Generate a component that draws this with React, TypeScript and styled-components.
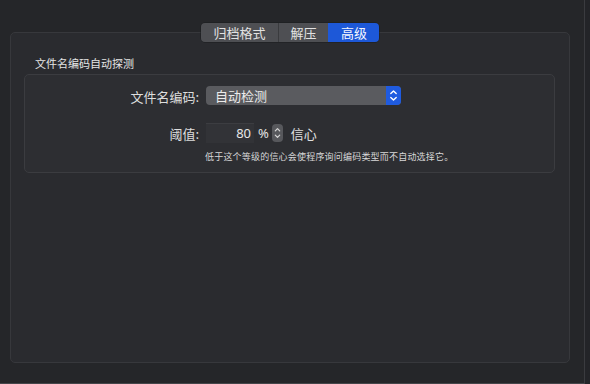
import React from "react";
import styled, { createGlobalStyle } from "styled-components";

const Global = createGlobalStyle`
  html, body { margin: 0; padding: 0; background: #232428; }
  body { font-family: "Noto Sans CJK SC", "Noto Sans", sans-serif; color: #dedede; }
`;

const Window = styled.div`
  width: 584px;
  height: 383px;
  background: #252629;
  border-right: 1px solid #3a3b3f;
  border-bottom: 1px solid #45464a;
  display: flex;
  flex-direction: column;
  align-items: flex-start;
  box-sizing: content-box;
`;

const TabBar = styled.div`
  display: flex;
  align-self: center;
  margin-top: 23px;
  margin-right: 4px;
  height: 19px;
  border-radius: 4px;
  overflow: hidden;
  position: relative;
  z-index: 1;
  box-shadow: 0 0 0 0.5px #1b1c1f;
`;

const Tab = styled.div<{ $active?: boolean; $w: number }>`
  width: ${(p) => p.$w}px;
  height: 19px;
  display: flex;
  align-items: center;
  justify-content: center;
  font-size: 13px;
  line-height: 19px;
  color: ${(p) => (p.$active ? "#f4f6ff" : "#e2e2e2")};
  background: ${(p) => (p.$active ? "#1d58d8" : "#4e4f53")};
  border-left: 1px solid ${(p) => (p.$active ? "#1d58d8" : "#3a3b3e")};
  &:first-child { border-left: none; }
`;

const GroupBox = styled.div`
  margin-top: -10px;
  margin-left: 10px;
  width: 560px;
  height: 331px;
  box-sizing: border-box;
  background: #2a2b2f;
  border: 1px solid #37383c;
  border-radius: 5px;
  padding: 23px 13px 0 13px;
  display: flex;
  flex-direction: column;
`;

const SectionLabel = styled.div`
  font-size: 11px;
  line-height: 14px;
  margin-left: 11px;
  color: #e4e4e4;
`;

const InnerBox = styled.div`
  margin-top: 4px;
  width: 531px;
  height: 99px;
  box-sizing: border-box;
  background: #2d2e32;
  border: 1px solid #3b3c40;
  border-radius: 5px;
  display: grid;
  grid-template-columns: 175px 1fr;
  column-gap: 6px;
  align-content: start;
  padding-top: 11px;
`;

const RowLabel = styled.div<{ $mt?: number }>`
  text-align: right;
  font-size: 13px;
  line-height: 19px;
  height: 20px;
  display: flex;
  align-items: center;
  justify-content: flex-end;
  margin-top: ${(p) => p.$mt ?? 0}px;
  margin-right: 1px;
  color: #dedede;
`;

const Popup = styled.div`
  width: 195px;
  height: 19px;
  border-radius: 4px;
  background: #5a5b5f;
  display: flex;
  align-items: center;
  justify-content: space-between;
  overflow: hidden;
`;

const PopupText = styled.span`
  font-size: 13px;
  line-height: 19px;
  padding-left: 9px;
  color: #ececec;
`;

const PopupArrows = styled.div`
  width: 15px;
  height: 19px;
  background: #1f5be0;
  display: flex;
  align-items: center;
  justify-content: center;
`;

const FieldRow = styled.div<{ $mt?: number }>`
  display: flex;
  align-items: center;
  margin-top: ${(p) => p.$mt ?? 0}px;
  height: 20px;
`;

const NumberField = styled.div`
  width: 48px;
  height: 20px;
  box-sizing: border-box;
  background: #323337;
  border-top: 1px solid #3c3d41;
  font-size: 13px;
  line-height: 19px;
  text-align: right;
  padding-right: 3px;
  color: #e8e8e8;
  font-family: "Noto Sans", "Noto Sans CJK SC", sans-serif;
`;

const Unit = styled.span`
  font-size: 13px;
  margin-left: 4px;
  color: #e4e4e4;
  font-family: "Noto Sans", sans-serif;
`;

const Stepper = styled.div`
  width: 11px;
  height: 18px;
  margin-left: 3px;
  border-radius: 4px;
  background: #57585c;
  display: flex;
  align-items: center;
  justify-content: center;
`;

const Trailing = styled.span`
  font-size: 13px;
  margin-left: 8px;
  color: #e0e0e0;
`;

const Hint = styled.div`
  grid-column: 2;
  font-size: 9px;
  line-height: 12px;
  margin-top: 8px;
  margin-left: -1px;
  letter-spacing: 0.2px;
  color: #d8d8d8;
  white-space: nowrap;
`;

const Chevrons = ({ w, h }: { w: number; h: number }) => (
  <svg width={w} height={h} viewBox="0 0 15 19" fill="none">
    <path d="M4.8 7.6 L7.5 4.9 L10.2 7.6" stroke="#fff" strokeWidth="1.4" strokeLinecap="round" strokeLinejoin="round" />
    <path d="M4.8 11.4 L7.5 14.1 L10.2 11.4" stroke="#fff" strokeWidth="1.4" strokeLinecap="round" strokeLinejoin="round" />
  </svg>
);

const SmallChevrons = () => (
  <svg width="11" height="18" viewBox="0 0 11 18" fill="none">
    <path d="M3.3 6.8 L5.5 4.6 L7.7 6.8" stroke="#d8d8d8" strokeWidth="1.2" strokeLinecap="round" strokeLinejoin="round" />
    <path d="M3.3 11.2 L5.5 13.4 L7.7 11.2" stroke="#d8d8d8" strokeWidth="1.2" strokeLinecap="round" strokeLinejoin="round" />
  </svg>
);

export default function App() {
  return (
    <>
      <Global />
      <Window>
        <TabBar>
          <Tab $w={77}>归档格式</Tab>
          <Tab $w={49}>解压</Tab>
          <Tab $w={50} $active>高级</Tab>
        </TabBar>
        <GroupBox>
          <SectionLabel>文件名编码自动探测</SectionLabel>
          <InnerBox>
            <RowLabel>文件名编码:</RowLabel>
            <Popup>
              <PopupText>自动检测</PopupText>
              <PopupArrows>
                <Chevrons w={15} h={19} />
              </PopupArrows>
            </Popup>
            <RowLabel $mt={17}>阈值:</RowLabel>
            <FieldRow $mt={17}>
              <NumberField>80</NumberField>
              <Unit>%</Unit>
              <Stepper>
                <SmallChevrons />
              </Stepper>
              <Trailing>信心</Trailing>
            </FieldRow>
            <Hint>低于这个等级的信心会使程序询问编码类型而不自动选择它。</Hint>
          </InnerBox>
        </GroupBox>
      </Window>
    </>
  );
}
